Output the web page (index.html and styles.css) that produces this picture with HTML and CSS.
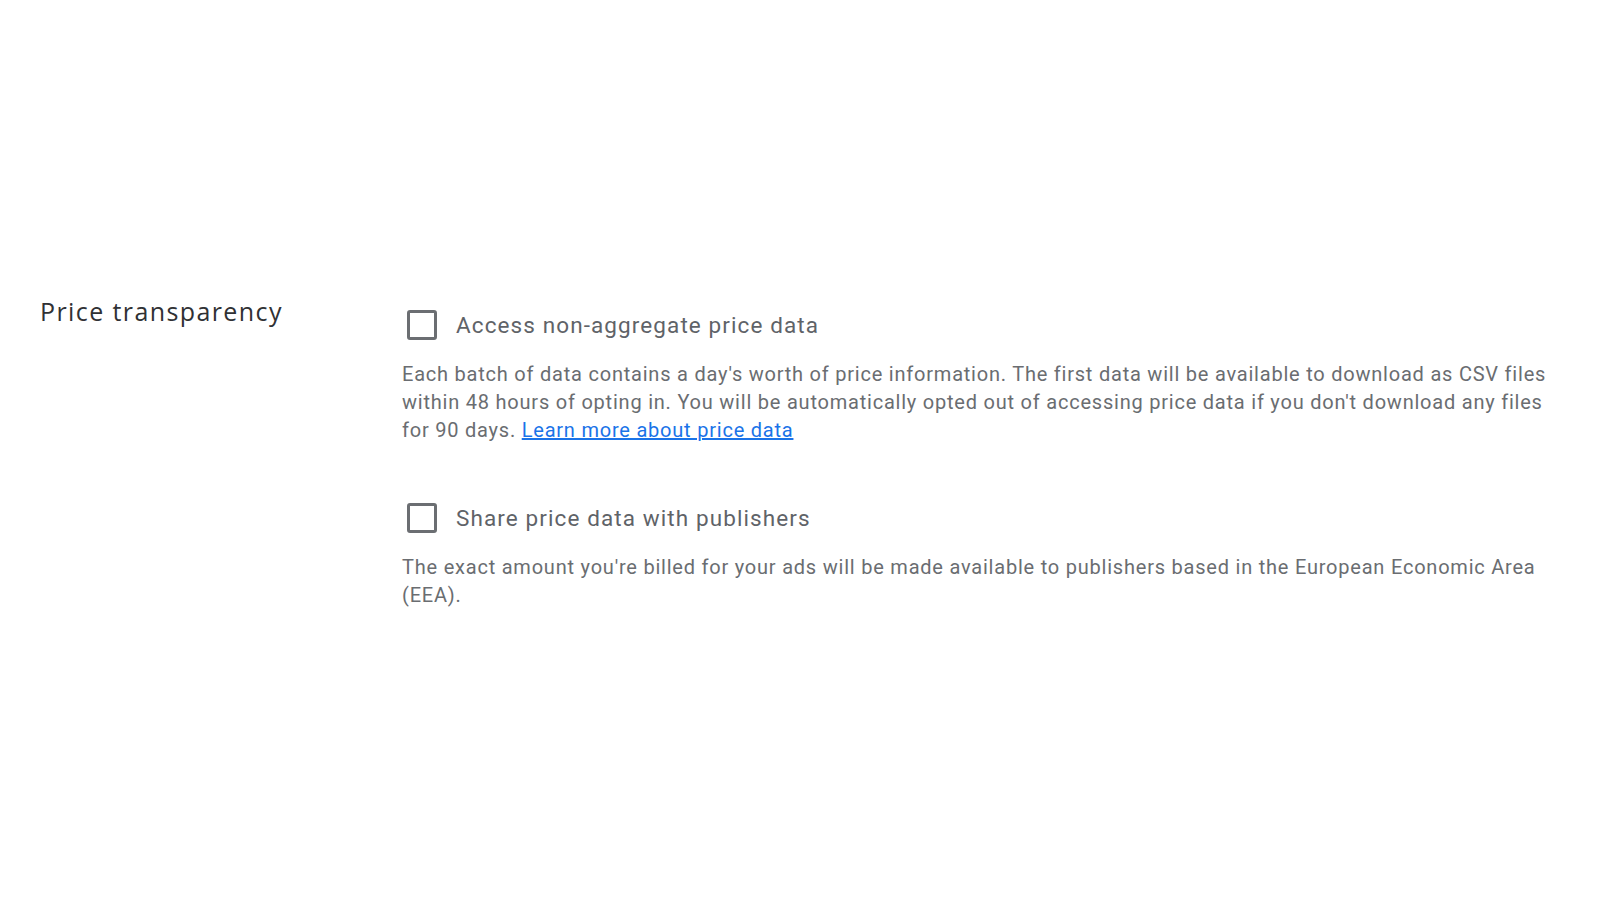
FILE: index.html
```html
<!DOCTYPE html>
<html lang="en">
<head>
<meta charset="utf-8">
<title>Price transparency</title>
<link rel="stylesheet" href="styles.css">
</head>
<body>
<main class="page">
  <section class="setting">
    <h2 class="setting-title">Price transparency</h2>
    <div class="options">
      <div class="option">
        <label class="option-row">
          <span class="checkbox"></span>
          <span class="option-label">Access non-aggregate price data</span>
        </label>
        <p class="option-desc">Each batch of data contains a day's worth of price information. The first data will be available to download as CSV files within 48 hours of opting in. You will be automatically opted out of accessing price data if you don't download any files for 90 days. <a class="link" href="#">Learn more about price data</a></p>
      </div>
      <div class="option">
        <label class="option-row">
          <span class="checkbox"></span>
          <span class="option-label">Share price data with publishers</span>
        </label>
        <p class="option-desc">The exact amount you're billed for your ads will be made available to publishers based in the European Economic Area (EEA).</p>
      </div>
    </div>
  </section>
</main>
</body>
</html>
```

FILE: styles.css
```css
* { box-sizing: border-box; }
html, body { margin: 0; padding: 0; background: #ffffff; }
body { font-family: Roboto, "Liberation Sans", sans-serif; color: #5f6368; }

.page { padding: 294px 0 0 40px; width: 1600px; height: 900px; }

.setting { display: grid; grid-template-columns: 362px 1160px; }

.setting-title {
  margin: 0;
  font-family: "Open Sans", Roboto, sans-serif;
  font-weight: 400;
  font-size: 25px;
  line-height: 34px;
  letter-spacing: 1.4px;
  color: #303134;
}

.options { padding-top: 16px; display: flex; flex-direction: column; gap: 59px; }

.option { display: flex; flex-direction: column; gap: 20px; }

.option-row { display: flex; align-items: center; gap: 19px; padding-left: 5px; height: 30px; cursor: pointer; }

.checkbox {
  width: 30px; height: 30px; flex: none;
  border: 3px solid #6b6e72;
  border-radius: 3px;
}

.option-label { font-size: 22.5px; line-height: 30px; color: #5f6368; letter-spacing: 1.1px; }

.option-desc {
  margin: 0;
  font-size: 20px;
  line-height: 28px;
  letter-spacing: 0.78px;
  color: #6a6d71;
}

.link { color: #1a73e8; text-decoration: underline; }
```
